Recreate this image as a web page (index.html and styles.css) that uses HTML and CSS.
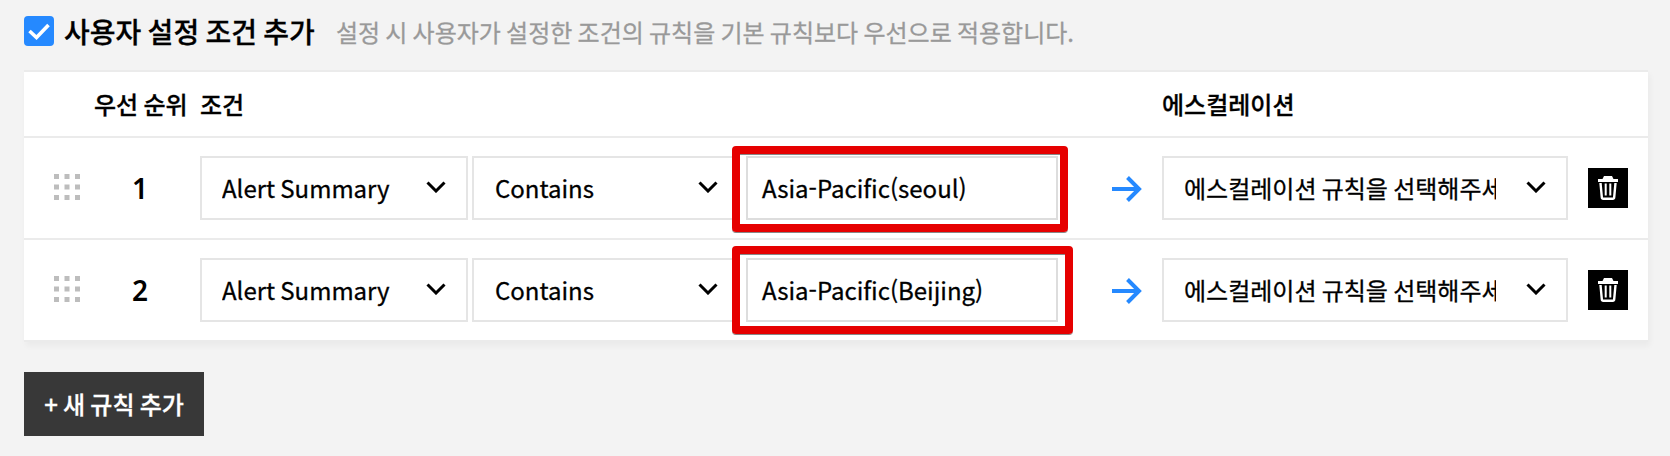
FILE: index.html
```html
<!DOCTYPE html>
<html lang="ko">
<head>
<meta charset="utf-8">
<title>사용자 설정 조건 추가</title>
<link rel="stylesheet" href="styles.css">
</head>
<body>
<svg class="sprite" aria-hidden="true">
  <symbol id="grip" viewBox="0 0 26 26"><path fill="#bdbdbd" d="M0 0h5v5H0zM10.500 0h5v5h-5zM21 0h5v5h-5zM0 10.500h5v5H0zM10.500 10.500h5v5h-5zM21 10.500h5v5h-5zM0 21h5v5H0zM10.500 21h5v5h-5zM21 21h5v5h-5z"/></symbol>
  <symbol id="chevron" viewBox="0 0 20 12"><path fill="none" stroke="#000" stroke-width="3" d="M1.500 1.500 10 10l8.500-8.500"/></symbol>
  <symbol id="arrow" viewBox="0 0 30 26"><path fill="none" stroke="#2589ff" stroke-width="4" d="M0 13h27M15.500 1.500 27 13 15.500 24.500"/></symbol>
  <symbol id="trash" viewBox="0 0 20 24"><path fill="#fff" d="M0 3h4.500L6 0h8l1.500 3H20v3H0z"/><path fill="none" stroke="#fff" stroke-width="2.400" d="M2.500 7 3.800 21.200q.1 1.600 1.500 1.600h9.400q1.400 0 1.500-1.600L17.500 7"/><path stroke="#fff" stroke-width="2" d="M7.700 7.500v12M12.300 7.500v12"/></symbol>
</svg>
<header class="heading">
  <span class="checkbox"><svg width="22" height="17" viewBox="0 0 22 17"><path fill="none" stroke="#fff" stroke-width="3.600" d="M1.500 8 8.500 14.500 20.500 2"/></svg></span>
  <h1 class="title">사용자 설정 조건 추가</h1>
  <p class="hint">설정 시 사용자가 설정한 조건의 규칙을 기본 규칙보다 우선으로 적용합니다.</p>
</header>
<main class="table">
  <div class="row head">
    <span></span><span class="order">우선 순위</span><span>조건</span><span></span><span></span><span></span><span>에스컬레이션</span><span></span>
  </div>
  <div class="row">
    <svg class="grip"><use href="#grip"/></svg>
    <span class="number">1</span>
    <div class="select"><span class="value">Alert Summary</span><svg class="chevron"><use href="#chevron"/></svg></div>
    <div class="select operator"><span class="value">Contains</span><svg class="chevron"><use href="#chevron"/></svg></div>
    <div class="field"><span>Asia-Pacific(seoul)</span><i class="mark mark-first"></i></div>
    <svg class="arrow"><use href="#arrow"/></svg>
    <div class="select wide"><span class="value">에스컬레이션 규칙을 선택해주세</span><svg class="chevron"><use href="#chevron"/></svg></div>
    <span class="delete"><svg width="20" height="24"><use href="#trash"/></svg></span>
  </div>
  <div class="row">
    <svg class="grip"><use href="#grip"/></svg>
    <span class="number">2</span>
    <div class="select"><span class="value">Alert Summary</span><svg class="chevron"><use href="#chevron"/></svg></div>
    <div class="select operator"><span class="value">Contains</span><svg class="chevron"><use href="#chevron"/></svg></div>
    <div class="field"><span>Asia-Pacific(Beijing)</span><i class="mark mark-second"></i></div>
    <svg class="arrow"><use href="#arrow"/></svg>
    <div class="select wide"><span class="value">에스컬레이션 규칙을 선택해주세</span><svg class="chevron"><use href="#chevron"/></svg></div>
    <span class="delete"><svg width="20" height="24"><use href="#trash"/></svg></span>
  </div>
</main>
<button class="add" type="button">+ 새 규칙 추가</button>
</body>
</html>
```
FILE: styles.css
```css
* { box-sizing: border-box; }
body {
  margin: 0;
  height: 456px;
  padding: 0 22px 0 24px;
  overflow: hidden;
  background: #f3f3f3;
  color: #000;
  font-family: "Noto Sans CJK KR", sans-serif;
  font-size: 24px;
  line-height: 36px;
  word-spacing: -1.5px;
  -webkit-text-stroke: .3px currentColor;
}
.sprite { position: absolute; width: 0; height: 0; }
.heading { display: flex; align-items: center; height: 70px; padding-bottom: 8px; }
.checkbox {
  display: flex;
  align-items: center;
  justify-content: center;
  width: 30px;
  height: 30px;
  border-radius: 4px;
  background: #2589ff;
}
.title { margin: 0 0 0 10px; font-size: 28px; font-weight: 500; white-space: nowrap; }
.hint { margin: 1px 0 0 21px; color: #999; white-space: nowrap; }
.table {
  border-top: 2px solid #ebebeb;
  background: #fff;
  box-shadow: 2px 4px 6px rgba(0, 0, 0, .04);
}
.row {
  display: grid;
  grid-template-columns: 56px 120px 272px 274px 366px 50px 426px 40px;
  align-items: center;
  height: 102px;
  border-bottom: 2px solid #ebebeb;
}
.head { height: 66px; font-weight: 500; white-space: nowrap; }
.order { padding-left: 14px; }
.grip { width: 26px; height: 26px; margin: 0 0 2px 30px; }
.number {
  font-family: "Noto Sans", sans-serif;
  font-size: 28px;
  font-weight: 600;
  text-align: center;
  -webkit-text-stroke: 0;
}
.select, .field {
  display: flex;
  align-items: center;
  height: 64px;
  border: 2px solid #e5e5e5;
  white-space: nowrap;
}
.select { justify-content: space-between; width: 268px; padding: 0 20px; }
.operator { padding-left: 21px; }
.wide { width: 406px; }
.value { overflow: hidden; }
.wide .value { width: 312px; }
.chevron { flex: none; width: 20px; height: 12px; margin-top: -2px; }
.field { position: relative; width: 312px; padding-left: 14px; border-color: #ddd; }
.mark {
  position: absolute;
  left: -16px;
  border: 8px solid #e60000;
  border-radius: 4px;
  box-shadow: 0 1px 0 #888, inset 0 1px 0 #888;
}
.mark-first { top: -12px; width: 336px; height: 86px; }
.mark-second { top: -14px; width: 341px; height: 88px; }
.arrow { width: 30px; height: 26px; margin-top: 2px; }
.delete {
  display: flex;
  align-items: center;
  justify-content: center;
  width: 40px;
  height: 40px;
  background: #000;
}
.add {
  display: block;
  width: 180px;
  height: 64px;
  margin-top: 30px;
  padding: 0;
  border: 0;
  background: #383838;
  color: #fff;
  font: 500 24px/36px "Noto Sans CJK KR", sans-serif;
  word-spacing: -1.5px;
}
```
